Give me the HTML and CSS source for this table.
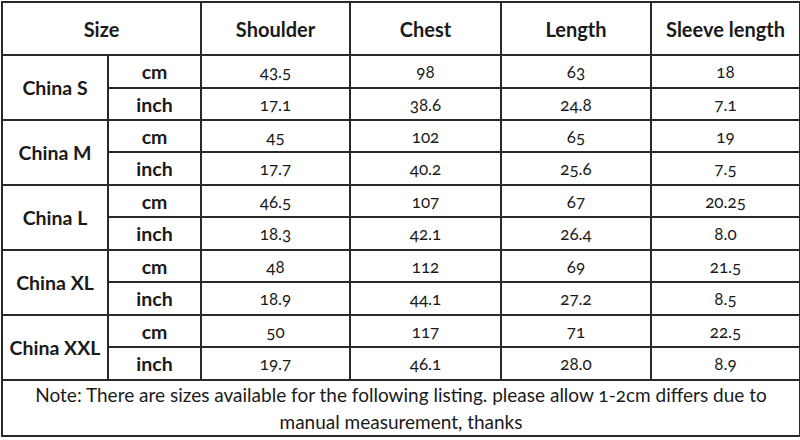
FILE: index.html
```html
<!DOCTYPE html>
<html>
<head>
<meta charset="utf-8">
<link rel="stylesheet" href="styles.css">
</head>
<body>
<table class="chart">
  <colgroup>
    <col class="c-size"><col class="c-unit"><col class="c-sh"><col class="c-ch"><col class="c-len"><col class="c-sl">
  </colgroup>
  <thead>
    <tr class="head"><th colspan="2">Size</th><th>Shoulder</th><th>Chest</th><th>Length</th><th>Sleeve length</th></tr>
  </thead>
  <tbody>
    <tr class="r-a"><th rowspan="2" class="sz">China S</th><th class="unit">cm</th><td>43.5</td><td>98</td><td>63</td><td>18</td></tr>
    <tr class="r-b"><th class="unit">inch</th><td>17.1</td><td>38.6</td><td>24.8</td><td>7.1</td></tr>
    <tr class="r-b"><th rowspan="2" class="sz">China M</th><th class="unit">cm</th><td>45</td><td>102</td><td>65</td><td>19</td></tr>
    <tr class="r-a"><th class="unit">inch</th><td>17.7</td><td>40.2</td><td>25.6</td><td>7.5</td></tr>
    <tr class="r-b"><th rowspan="2" class="sz">China L</th><th class="unit">cm</th><td>46.5</td><td>107</td><td>67</td><td>20.25</td></tr>
    <tr class="r-a"><th class="unit">inch</th><td>18.3</td><td>42.1</td><td>26.4</td><td>8.0</td></tr>
    <tr class="r-b"><th rowspan="2" class="sz">China XL</th><th class="unit">cm</th><td>48</td><td>112</td><td>69</td><td>21.5</td></tr>
    <tr class="r-a"><th class="unit">inch</th><td>18.9</td><td>44.1</td><td>27.2</td><td>8.5</td></tr>
    <tr class="r-b"><th rowspan="2" class="sz">China XXL</th><th class="unit">cm</th><td>50</td><td>117</td><td>71</td><td>22.5</td></tr>
    <tr class="r-a"><th class="unit">inch</th><td>19.7</td><td>46.1</td><td>28.0</td><td>8.9</td></tr>
    <tr class="note"><td colspan="6">Note: There are sizes available for the following listing. please allow 1-2cm differs due to<br>manual measurement, thanks</td></tr>
  </tbody>
</table>
</body>
</html>
```
FILE: styles.css
```css
html, body {
  margin: 0;
  padding: 0;
  background: #fff;
}
body {
  padding: 1px 0 0 1px;
  font-family: Lato, "Open Sans", "Liberation Sans", sans-serif;
  color: #1a1a1a;
  font-variant-numeric: oldstyle-nums;
}
.chart {
  border-collapse: collapse;
  table-layout: fixed;
  width: 798px;
}
.c-size { width: 106px; }
.c-unit { width: 93px; }
.c-sh { width: 149px; }
.c-ch { width: 151px; }
.c-len { width: 150px; }
.c-sl { width: 149px; }
.chart th, .chart td {
  border: 2px solid #2a2a2a;
  padding: 0;
  text-align: center;
  vertical-align: middle;
}
.chart th {
  font-weight: bold;
  font-size: 19px;
}
.chart td {
  font-size: 17px;
  font-weight: normal;
}
.head th {
  height: 51px;
  font-size: 20px;
}
.r-a th, .r-a td { height: 31px; }
.r-b th, .r-b td { height: 30px; }
.chart .unit {
  font-size: 19.5px;
}
.chart .sz {
  font-size: 19.5px;
}
.note td {
  height: 54px;
  font-size: 19px;
  line-height: 27px;
}
```
